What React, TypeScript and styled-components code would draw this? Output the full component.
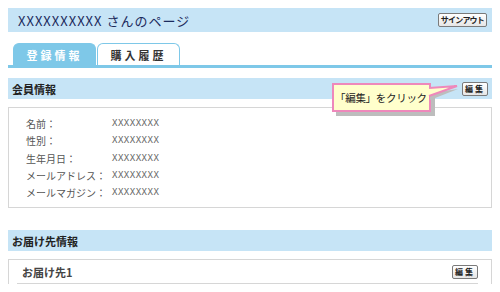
import React from 'react';
import styled, { createGlobalStyle } from 'styled-components';

const GlobalStyle = createGlobalStyle`
  html, body {
    margin: 0;
    padding: 0;
    background: #ffffff;
  }
  body {
    font-family: "Noto Sans CJK JP", "DejaVu Sans", sans-serif;
    font-size: 12px;
    color: #333333;
  }
  * {
    box-sizing: border-box;
  }
`;

const Page = styled.div`
  width: 500px;
  padding: 8px;
  display: flex;
  flex-direction: column;
`;

const TitleBar = styled.div`
  height: 24px;
  background-color: #c6e4f6;
  display: flex;
  align-items: center;
  justify-content: space-between;
  padding: 0 5px 0 10px;
`;

const Title = styled.h1`
  margin: 0;
  font-size: 13px;
  font-weight: normal;
  color: #1b2a5c;
  letter-spacing: 1px;
  white-space: nowrap;
`;

const SmallButton = styled.button<{ $spacing?: number }>`
  font-family: "Noto Sans CJK JP", sans-serif;
  font-size: 8px;
  font-weight: bold;
  line-height: 1;
  letter-spacing: ${({ $spacing = -0.8 }) => $spacing}px;
  color: #222222;
  background: linear-gradient(#ffffff, #e6e6e6);
  border: 1px solid #7a7a7a;
  border-radius: 2px;
  padding: 0 2px;
  height: 14px;
  white-space: nowrap;
  cursor: pointer;
`;

const Tabs = styled.div`
  margin-top: 11px;
  display: flex;
  gap: 1px;
  padding-left: 5px;
  border-bottom: 3px solid #7ec8e8;
`;

const Tab = styled.div<{ $active?: boolean }>`
  width: 83px;
  height: 22px;
  display: flex;
  align-items: center;
  justify-content: center;
  border: 1px solid #7ec8e8;
  border-bottom: none;
  border-radius: 6px 6px 0 0;
  background-color: ${({ $active }) => ($active ? '#7ec8e8' : '#ffffff')};
  color: ${({ $active }) => ($active ? '#ffffff' : '#333333')};
  font-weight: bold;
  font-size: 11px;
  letter-spacing: 3px;
`;

const Section = styled.section<{ $gap: number }>`
  margin-top: ${({ $gap }) => $gap}px;
  display: flex;
  flex-direction: column;
  gap: 8px;
`;

const SectionHeader = styled.div`
  position: relative;
  height: 21px;
  background-color: #c6e4f6;
  display: flex;
  align-items: center;
  justify-content: space-between;
  padding: 0 4px;
`;

const SectionTitle = styled.h2`
  margin: 0;
  font-size: 11px;
  font-weight: bold;
  color: #222222;
`;

const Box = styled.div`
  border: 1px solid #d6d6d6;
  padding: 7px 0 6px 17px;
`;

const InfoGrid = styled.dl`
  margin: 0;
  display: grid;
  grid-template-columns: 86px 1fr;
`;

const Label = styled.dt`
  font-size: 10px;
  line-height: 17.3px;
  color: #555555;
  white-space: nowrap;
`;

const Value = styled.dd`
  margin: 0;
  font-family: "DejaVu Sans Mono", monospace;
  font-size: 9px;
  line-height: 17.3px;
  color: #666666;
  letter-spacing: 0.5px;
`;

const AddressBox = styled.div`
  border: 1px solid #d6d6d6;
  border-bottom: none;
  padding: 0 13px 0 8px;
`;

const AddressHead = styled.div`
  height: 24px;
  display: flex;
  align-items: center;
  justify-content: space-between;
  border-bottom: 1px solid #d6d6d6;
  padding-left: 5px;
  font-size: 11px;
  font-weight: bold;
  color: #444444;
`;

const Callout = styled.div`
  position: absolute;
  left: 324px;
  top: 5px;
  width: 99px;
  height: 29px;
  background-color: #ffffcc;
  border: 2px solid #ee88bb;
  box-shadow: 4px 4px 0 #bdbdbd;
  display: flex;
  align-items: center;
  padding-left: 1px;
  font-size: 10.5px;
  letter-spacing: -0.3px;
  white-space: nowrap;
  color: #222222;
  z-index: 2;
`;

const Pointer = styled.svg`
  position: absolute;
  left: 94px;
  top: 0;
  overflow: visible;
`;

export default function App() {
  return (
    <>
      <GlobalStyle />
      <Page>
        <TitleBar>
          <Title>XXXXXXXXXX さんのページ</Title>
          <SmallButton>サインアウト</SmallButton>
        </TitleBar>

        <Tabs>
          <Tab $active>登録情報</Tab>
          <Tab>購入履歴</Tab>
        </Tabs>

        <Section $gap={10}>
          <SectionHeader>
            <SectionTitle>会員情報</SectionTitle>
            <SmallButton $spacing={2}>編集</SmallButton>
            <Callout>
              「編集」をクリック
              <Pointer width="30" height="14">
                <polygon points="2,8 30,4 2,15" fill="#bdbdbd" />
                <polygon points="0,3 29,1 0,11" fill="#ffffcc" />
                <polyline points="1,3 29,1 1,11" fill="none" stroke="#ee88bb" strokeWidth="2" />
              </Pointer>
            </Callout>
          </SectionHeader>
          <Box>
            <InfoGrid>
              <Label>名前：</Label>
              <Value>XXXXXXXX</Value>
              <Label>性別：</Label>
              <Value>XXXXXXXX</Value>
              <Label>生年月日：</Label>
              <Value>XXXXXXXX</Value>
              <Label>メールアドレス：</Label>
              <Value>XXXXXXXX</Value>
              <Label>メールマガジン：</Label>
              <Value>XXXXXXXX</Value>
            </InfoGrid>
          </Box>
        </Section>

        <Section $gap={22}>
          <SectionHeader>
            <SectionTitle>お届け先情報</SectionTitle>
          </SectionHeader>
          <AddressBox>
            <AddressHead>
              お届け先1
              <SmallButton $spacing={2}>編集</SmallButton>
            </AddressHead>
          </AddressBox>
        </Section>
      </Page>
    </>
  );
}
